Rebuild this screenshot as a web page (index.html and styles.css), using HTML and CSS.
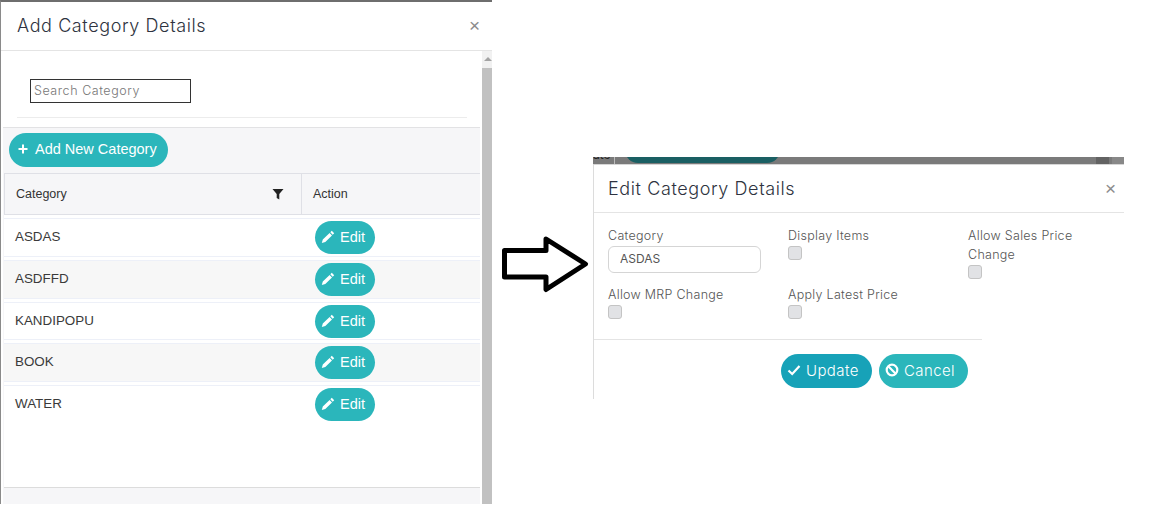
FILE: index.html
```html
<!DOCTYPE html>
<html lang="en">
<head>
<meta charset="utf-8">
<title>Category Details</title>
<link rel="stylesheet" href="styles.css">
</head>
<body>
<section class="win win-left">
  <header class="head">
    <h2 class="title">Add Category Details</h2>
    <span class="close">&times;</span>
  </header>
  <div class="scroller">
    <div class="content">
      <div class="search-area">
        <input class="search" type="text" placeholder="Search Category">
        <div class="search-rule"></div>
      </div>
      <div class="panel">
        <button class="pill add-btn" type="button">
          <svg class="ic-plus" viewBox="0 0 10 10"><path d="M5 .5v9M.5 5h9"/></svg>
          <span>Add New Category</span>
        </button>
        <div class="thead">
          <div class="th th-cat"><span>Category</span>
            <svg class="ic-filter" viewBox="0 0 12 12"><path d="M.5 1h11L7.3 6v5.500L4.700 10V6z"/></svg>
          </div>
          <div class="th th-act">Action</div>
        </div>
        <div class="tbody">
          <div class="row"><span class="cell-name">ASDAS</span><button class="pill edit" type="button"><svg class="ic-pencil" viewBox="0 0 14 14"><path d="M10.800.8l2.400 2.400-1.500 1.500-2.400-2.400zM8.600 3l2.400 2.400-6.700 6.700-3.500 1 1-3.500z"/></svg><span>Edit</span></button></div>
          <div class="row alt"><span class="cell-name">ASDFFD</span><button class="pill edit" type="button"><svg class="ic-pencil" viewBox="0 0 14 14"><path d="M10.800.8l2.400 2.400-1.500 1.500-2.400-2.400zM8.600 3l2.400 2.400-6.700 6.700-3.500 1 1-3.500z"/></svg><span>Edit</span></button></div>
          <div class="row"><span class="cell-name">KANDIPOPU</span><button class="pill edit" type="button"><svg class="ic-pencil" viewBox="0 0 14 14"><path d="M10.800.8l2.400 2.400-1.500 1.500-2.400-2.400zM8.600 3l2.400 2.400-6.700 6.700-3.500 1 1-3.500z"/></svg><span>Edit</span></button></div>
          <div class="row alt"><span class="cell-name">BOOK</span><button class="pill edit" type="button"><svg class="ic-pencil" viewBox="0 0 14 14"><path d="M10.800.8l2.400 2.400-1.500 1.500-2.400-2.400zM8.600 3l2.400 2.400-6.700 6.700-3.500 1 1-3.500z"/></svg><span>Edit</span></button></div>
          <div class="row last"><span class="cell-name">WATER</span><button class="pill edit" type="button"><svg class="ic-pencil" viewBox="0 0 14 14"><path d="M10.800.8l2.400 2.400-1.500 1.500-2.400-2.400zM8.600 3l2.400 2.400-6.700 6.700-3.500 1 1-3.500z"/></svg><span>Edit</span></button></div>
        </div>
        <div class="tfoot"></div>
      </div>
    </div>
    <div class="scrollbar">
      <div class="sb-up"></div>
      <div class="sb-thumb"></div>
    </div>
  </div>
</section>

<svg class="arrow" viewBox="0 0 90 60"><path d="M3.500 15.500h41.500V4l39.500 25L45 54.500V42H3.500z"/></svg>

<section class="win win-right">
  <div class="backdrop">
    <span class="bd-text">ate</span>
    <span class="bd-btn"></span>
    <span class="bd-spacer"></span>
    <span class="bd-patch"></span>
    <span class="bd-line"></span>
  </div>
  <div class="sheet">
    <header class="head head-right">
      <h2 class="title">Edit Category Details</h2>
      <span class="close">&times;</span>
    </header>
    <div class="form">
      <div class="field">
        <label class="lbl">Category</label>
        <input class="text-input" type="text" value="ASDAS">
      </div>
      <div class="field">
        <label class="lbl">Display Items</label>
        <span class="check"></span>
      </div>
      <div class="field">
        <label class="lbl lbl-wrap">Allow Sales Price Change</label>
        <span class="check"></span>
      </div>
      <div class="field">
        <label class="lbl">Allow MRP Change</label>
        <span class="check"></span>
      </div>
      <div class="field">
        <label class="lbl">Apply Latest Price</label>
        <span class="check"></span>
      </div>
    </div>
    <footer class="actions">
      <button class="pill act update" type="button">
        <svg class="ic-check" viewBox="0 0 14 12"><path d="M1.500 6.500l3.700 3.500 7.300-8"/></svg>
        <span>Update</span>
      </button>
      <button class="pill act cancel" type="button">
        <svg class="ic-ban" viewBox="0 0 14 14"><circle cx="7" cy="7" r="5.300"/><path d="M3.300 3.300l7.400 7.400"/></svg>
        <span>Cancel</span>
      </button>
    </footer>
  </div>
</section>
</body>
</html>
```
FILE: styles.css
```css
* { box-sizing: border-box; }
html, body { margin: 0; height: 100%; background: #fff; overflow: hidden; }
body { font-family: "Inter", "Liberation Sans", sans-serif; color: #333; }

.win { position: absolute; background: #fff; }
.win-left {
  left: 0; top: 0; width: 492px; height: 504px;
  border-top: 2px solid #6e6e6e;
  border-left: 1px solid #8a8a8a;
  display: flex; flex-direction: column;
}
.win-right { left: 593px; top: 157px; width: 531px; height: 242px; display: flex; flex-direction: column; }

.head {
  height: 49px; flex: none;
  display: flex; align-items: center; justify-content: space-between;
  padding: 0 12px 1px 16px;
  border-bottom: 1px solid #e4e4e4;
}
.title { margin: 0; font-size: 18px; font-weight: 300; color: #2e3340; letter-spacing: .6px; }
.close { font-size: 19px; line-height: 1; color: #8c8c8c; font-family: "Liberation Sans", sans-serif; margin-top: -1px; }

.scroller { flex: 1; display: flex; min-height: 0; }
.content { flex: 1; min-width: 0; display: flex; flex-direction: column; }
.scrollbar { width: 10px; flex: none; background: #f1f1f1; display: flex; flex-direction: column; }
.sb-up { height: 17px; position: relative; }
.sb-up::after {
  content: ""; position: absolute; left: 2px; top: 6px;
  border: 4px solid transparent; border-top: 0; border-bottom: 4px solid #a3a3a3;
}
.sb-thumb { flex: 1; background: #c1c1c1; }

.search-area { height: 76px; flex: none; padding: 28px 15px 0 16px; }
.search {
  display: block; margin-left: 13px;
  width: 161px; height: 24px; padding: 0 3px 2px;
  border: 1px solid #333; background: #fff; border-radius: 0;
  font: 300 12.500px "Inter", sans-serif; letter-spacing: .55px; outline: 0;
}
.search::placeholder { color: #777; opacity: 1; }
.search-rule { margin-top: 14px; height: 1px; background: #ececec; }

.panel {
  flex: 1; min-height: 0; margin: 0 2px 0 2px;
  background: #f6f6f8; border-top: 1px solid #e2e2e4;
  display: flex; flex-direction: column;
}

.pill {
  border: 0; color: #fff; background: #2bb6bb;
  display: inline-flex; align-items: center; border-radius: 18px;
  font-family: "Liberation Sans", sans-serif; cursor: pointer;
}
.add-btn {
  align-self: flex-start; margin: 5px 0 6px 6px;
  width: 159px; height: 34px; padding: 0 0 2px 9px; gap: 7px;
  font-size: 14.500px;
}
.ic-plus { width: 10px; height: 10px; fill: none; stroke: #fff; stroke-width: 2; }

.thead {
  height: 42px; flex: none; display: flex; margin-left: 1px;
  border: 1px solid #dfe0e6; border-right: 0;
  font: 12.500px "Liberation Sans", sans-serif; color: #333;
}
.th { display: flex; align-items: center; }
.th-cat { width: 297px; padding: 0 17px 0 11px; justify-content: space-between; border-right: 1px solid #dfe0e6; }
.th-act { padding-left: 11px; }
.ic-filter { width: 12px; height: 12px; fill: #222; }

.tbody { flex: 1; min-height: 0; background: #fff; padding-top: 3.400px; display: flex; flex-direction: column; margin-left: 1px; }
.row {
  height: 38.700px; flex: none; margin-bottom: 3px;
  display: flex; align-items: center;
  border-top: 1px solid #edf0f8; border-bottom: 1px solid #edf0f8;
  font: 13.400px "Liberation Sans", sans-serif; color: #3a3a3a;
}
.row.alt { background: #f7f7f7; }
.row.last { border-color: #edf0f8 transparent transparent; }
.cell-name { width: 311px; padding-left: 11px; padding-bottom: 2px; }
.edit { width: 60px; height: 33px; padding: 0 0 1px 6px; gap: 5px; font-size: 14.500px; }
.ic-pencil { width: 14px; height: 14px; fill: #fff; }

.tfoot { height: 17px; flex: none; border-top: 1px solid #dcdcdc; margin-left: 1px; }

.arrow {
  position: absolute; left: 501px; top: 235px; width: 90px; height: 60px;
  fill: #fff; stroke: #000; stroke-width: 5; stroke-linejoin: round;
}

.backdrop { height: 8px; flex: none; background: #7a7a7a; display: flex; overflow: hidden; border-bottom: 1px solid #d6d6d6; }
.bd-text { width: 22px; font-size: 12px; line-height: 12px; margin-top: -8px; color: #222; border-right: 1px solid #bbb; margin-right: 10px; }
.bd-btn { width: 155px; height: 26px; margin-top: -20px; border-radius: 13px; background: #1a5f63; }
.bd-spacer { flex: 1; }
.bd-patch { width: 13px; background: #636363; margin-right: 3px; }
.bd-line { width: 12px; background: #888; }

.sheet { flex: 1; min-height: 0; border-left: 1px solid #dcdcdc; display: flex; flex-direction: column; background: #fff; }
.head-right { height: 48px; padding: 0 8px 0 14px; }

.form {
  display: grid; grid-template-columns: 180px 180px 150px;
  row-gap: 6px; padding: 13px 0 20px 14px;
  font-weight: 300; font-size: 12.500px; letter-spacing: .28px;
}
.field { display: flex; flex-direction: column; align-items: flex-start; }
.lbl { line-height: 19px; color: #555; }
.lbl-wrap { width: 125px; }
.text-input {
  width: 153px; height: 27px; margin-top: 1px; padding: 0 11px 2px;
  border: 1px solid #d5d5d5; border-radius: 6px; outline: 0;
  font: 400 12px "Inter", sans-serif; color: #555; background: #fff;
}
.check {
  width: 14px; height: 14px; margin-top: 1px;
  background: #e1e2e5; border: 1px solid #c4c4c4; border-radius: 3px;
}

.actions {
  width: 388px; border-top: 1px solid #e4e4e4;
  padding: 14px 14px 0 0;
  display: flex; justify-content: flex-end; gap: 7px;
}
.act { height: 34px; padding: 0 0 2px 6px; gap: 5px; font: 300 15px "Inter", sans-serif; letter-spacing: .4px; }
.update { width: 91px; background: #17a2b8; }
.cancel { width: 89px; }
.ic-check { width: 14px; height: 12px; fill: none; stroke: #fff; stroke-width: 2.200; }
.ic-ban { width: 14px; height: 14px; fill: none; stroke: #fff; stroke-width: 2.200; }
```
